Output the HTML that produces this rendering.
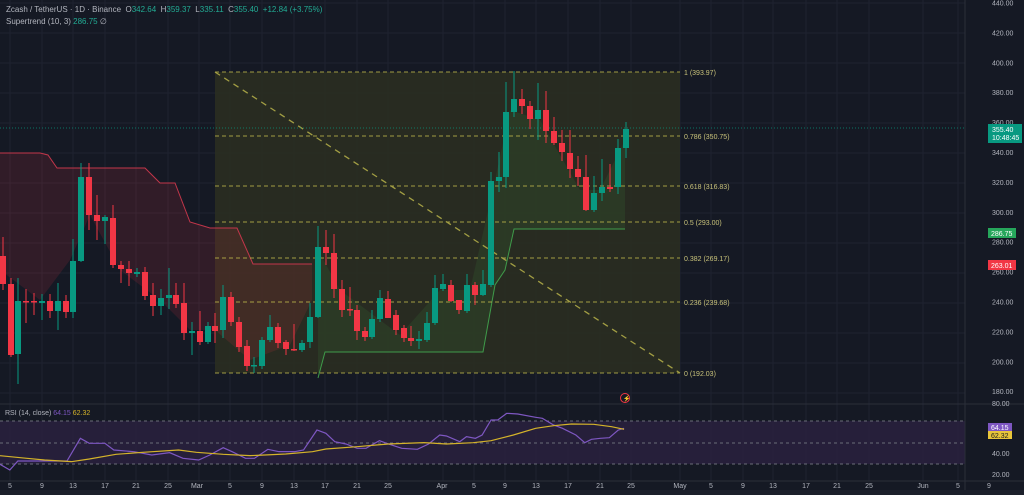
<!DOCTYPE html>
<html><head><meta charset="utf-8"><style>
html,body{margin:0;padding:0;background:#151924;width:1024px;height:495px;overflow:hidden;font-family:"Liberation Sans",sans-serif}
svg{position:absolute;left:0;top:0}
.t{position:absolute;color:#b2b5be;font-size:8px;white-space:nowrap}
.g{color:#22ab94}
</style></head><body>
<svg id="s" width="1024" height="495" xmlns="http://www.w3.org/2000/svg">
<rect width="1024" height="495" fill="#151924"/>
<g id="grid" stroke="#1f2330" stroke-width="1"></g>
<!-- fib box -->
<rect x="215" y="72" width="465" height="301" fill="#2a2d21" opacity="0.9"/>
<g id="st"></g>
<g stroke="#b8b34a" stroke-width="1" stroke-dasharray="4,3" opacity="0.85">
<line x1="215" y1="72" x2="680" y2="72"/><line x1="215" y1="136" x2="680" y2="136"/>
<line x1="215" y1="186" x2="680" y2="186"/><line x1="215" y1="222" x2="680" y2="222"/>
<line x1="215" y1="258" x2="680" y2="258"/><line x1="215" y1="302" x2="680" y2="302"/>
<line x1="215" y1="373" x2="680" y2="373"/>
<line x1="215" y1="72" x2="680" y2="373" stroke-dasharray="6,5" stroke-width="1.3"/>
</g>
<g font-size="7" fill="#c8c27a" font-family="Liberation Sans,sans-serif">
<text x="684" y="75">1 (393.97)</text><text x="684" y="139">0.786 (350.75)</text>
<text x="684" y="189">0.618 (316.83)</text><text x="684" y="225">0.5 (293.00)</text>
<text x="684" y="261">0.382 (269.17)</text><text x="684" y="305">0.236 (239.68)</text>
<text x="684" y="376">0 (192.03)</text>
</g>
<line x1="0" y1="128" x2="965" y2="128" stroke="#089981" stroke-dasharray="1,2" opacity="0.7"/>
<g id="c"></g>
<circle cx="625" cy="398" r="4.5" fill="none" stroke="#f23645" stroke-width="1"/>
<text x="623" y="400.5" font-size="6" fill="#f23645">⚡</text>
<!-- rsi pane -->
<line x1="0" y1="404" x2="1024" y2="404" stroke="#2a2e39"/>
<rect x="0" y="421" width="965" height="43" fill="#2a2140" opacity="0.8"/>
<g stroke="#6a6d78" stroke-dasharray="3,3"><line x1="0" y1="421" x2="965" y2="421"/><line x1="0" y1="443" x2="965" y2="443"/><line x1="0" y1="464" x2="965" y2="464"/></g>
<g transform="translate(0,400) scale(0.4464,0.3333)" fill="none" stroke-width="1.2">
<polyline vector-effect="non-scaling-stroke" stroke="#7e57c2" points="0,193 22,210 40,183 100,183 150,183 180,115 200,130 235,130 255,150 300,155 340,165 380,158 410,175 445,180 470,165 500,143 520,155 550,175 570,175 600,148 625,155 660,155 680,150 710,90 730,100 750,125 775,132 800,145 820,145 850,122 870,132 900,145 935,148 960,132 985,105 1000,108 1030,125 1045,110 1065,115 1080,105 1100,60 1115,60 1135,40 1160,42 1200,52 1215,55 1240,75 1260,85 1290,105 1310,128 1325,118 1345,115 1365,113 1385,90 1398,85"/>
<polyline vector-effect="non-scaling-stroke" stroke="#d4b32a" points="0,167 60,175 100,180 160,185 200,177 260,163 320,157 400,150 440,157 500,163 560,167 640,162 700,155 730,147 800,140 870,132 950,128 1000,132 1060,128 1100,122 1150,105 1200,85 1240,77 1280,72 1330,73 1370,80 1398,88"/>
</g>
<line x1="0" y1="481" x2="1024" y2="481" stroke="#2a2e39"/>
<rect x="0" y="490" width="1024" height="5" fill="#1c202b"/>
<line x1="965" y1="0" x2="965" y2="490" stroke="#2a2e39"/>
<g id="ax" font-size="7" fill="#b2b5be" font-family="Liberation Sans,sans-serif"></g>
<rect x="988" y="124" width="34" height="19" fill="#089981"/>
<text x="992" y="132" font-size="7" fill="#fff">355.40</text><text x="992" y="140" font-size="7" fill="#fff">10:48:45</text>
<rect x="988" y="228" width="28" height="10" fill="#26a65b"/><text x="991" y="236" font-size="7" fill="#fff">286.75</text>
<rect x="988" y="260" width="28" height="10" fill="#f23645"/><text x="991" y="268" font-size="7" fill="#fff">263.01</text>
<rect x="988" y="423" width="24" height="8" fill="#7e57c2"/><text x="991" y="430" font-size="7" fill="#fff">64.15</text>
<rect x="988" y="431" width="24" height="8" fill="#e8c53a"/><text x="991" y="438" font-size="7" fill="#222">62.32</text>
</svg>
<div class="t" style="left:6px;top:5px">Zcash / TetherUS · 1D · Binance &nbsp;O<span class="g">342.64</span> &nbsp;H<span class="g">359.37</span> &nbsp;L<span class="g">335.11</span> &nbsp;C<span class="g">355.40</span> &nbsp;<span class="g">+12.84 (+3.75%)</span></div>
<div class="t" style="left:6px;top:17px">Supertrend (10, 3) <span class="g">286.75</span> ∅</div>
<div class="t" style="left:5px;top:410px;font-size:7px">RSI (14, close) <span style="color:#7e57c2">64.15</span> <span style="color:#d4b32a">62.32</span></div>
<script>
const NS="http://www.w3.org/2000/svg";
function el(p,t,a){const e=document.createElementNS(NS,t);for(const k in a)e.setAttribute(k,a[k]);p.appendChild(e);return e;}
const grid=document.getElementById('grid');
[10,42,73,105,136,168,199,230,262,294,325,357,388,443,474,505,536,568,600,631,680,711,743,773,806,837,869,923,958].forEach(x=>el(grid,'line',{x1:x,y1:0,x2:x,y2:481}));
for(let y=3;y<400;y+=30)el(grid,'line',{x1:0,y1:y,x2:965,y2:y});
const ax=document.getElementById('ax');
for(let i=0;i<14;i++){const p=440-i*20;const y=3+i*29.9;const t=el(ax,'text',{x:992,y:y+2.5});t.textContent=p.toFixed(2);}
[[80,406],[40,456],[20,477]].forEach(a=>{const t=el(ax,'text',{x:992,y:a[1]});t.textContent=a[0].toFixed(2);});
const dl=[['5',10],['9',42],['13',73],['17',105],['21',136],['25',168],['Mar',197],['5',230],['9',262],['13',294],['17',325],['21',357],['25',388],['Apr',442],['5',474],['9',505],['13',536],['17',568],['21',600],['25',631],['May',680],['5',711],['9',743],['13',773],['17',806],['21',837],['25',869],['Jun',923],['5',958],['9',989]];
dl.forEach(d=>{const t=el(ax,'text',{x:d[1],y:488,'text-anchor':'middle'});t.textContent=d[0];});
// supertrend
const st=document.getElementById('st');
el(st,'path',{d:'M0,153 L40,153 48,155 57,168 145,168 160,183 175,183 190,222 210,228 237,228 253,264 312,264 312,300 290,345 250,360 215,330 190,330 160,300 120,270 90,215 70,260 40,300 0,270 Z',fill:'#f23645',opacity:0.13});
el(st,'path',{d:'M0,153 L40,153 48,155 57,168 145,168 160,183 175,183 190,222 210,228 237,228 253,264 312,264',fill:'none',stroke:'#c2364a','stroke-width':1});
el(st,'path',{d:'M318,378 L325,352 483,352 495,285 505,270 514,229 625,229 625,140 600,190 580,190 540,120 510,110 495,180 470,290 440,290 400,335 340,290 318,250 Z',fill:'#3a8a3a',opacity:0.15});
el(st,'path',{d:'M318,378 L325,352 483,352 495,285 505,270 514,229 625,229',fill:'none',stroke:'#3f9b4a','stroke-width':1});
const C=[[3,'r',256,284,237,290],[11,'r',284,355,278,357],[18,'g',301,354,278,384],[26,'r',301,302,289,323],[34,'r',301,302,293,315],[42,'g',301,303,294,320],[50,'r',301,311,294,318],[58,'g',301,311,283,330],[66,'r',301,312,295,318],[73,'g',261,312,239,318],[81,'g',177,261,163,262],[89,'r',177,215,163,230],[97,'r',215,221,195,240],[105,'g',217,221,215,244],[113,'r',218,265,205,268],[121,'r',265,269,261,283],[129,'r',269,273,261,286],[137,'g',272,274,268,277],[145,'r',272,296,267,300],[153,'r',295,306,283,316],[161,'g',298,306,289,315],[169,'g',295,298,268,309],[176,'r',295,304,283,308],[184,'r',303,333,283,340],[192,'g',331,333,322,355],[200,'r',331,342,311,345],[208,'g',326,342,322,344],[215,'r',326,331,313,343],[223,'g',297,330,285,338],[231,'r',297,322,292,326],[239,'r',322,347,317,352],[247,'r',346,366,340,371],[254,'g',365,366,357,373],[262,'g',340,366,337,369],[270,'g',327,340,315,342],[278,'r',327,343,323,348],[286,'r',342,349,340,355],[294,'r',349,350,324,351],[302,'g',343,350,340,352],[310,'g',317,342,303,348],[318,'g',247,317,226,318],[326,'r',247,253,230,265],[334,'r',253,289,234,298],[342,'r',289,310,280,317],[350,'r',309,310,287,316],[357,'r',310,331,305,340],[365,'r',331,337,327,341],[372,'g',319,337,310,339],[380,'g',298,319,290,322],[388,'r',299,318,291,316],[396,'r',315,330,310,335],[404,'r',328,338,325,342],[411,'r',338,341,326,346],[419,'g',339,341,331,349],[427,'g',323,340,312,342],[435,'g',288,323,275,325],[443,'g',284,289,274,291],[451,'r',285,301,280,302],[459,'r',300,310,300,314],[467,'g',285,311,274,313],[475,'r',285,295,282,305],[483,'g',284,295,270,296],[491,'g',181,285,172,287],[499,'g',177,181,152,192],[506,'g',112,177,82,188],[514,'g',99,112,71,117],[522,'r',99,106,89,114],[530,'r',106,119,101,129],[538,'g',110,119,83,140],[546,'r',110,131,91,143],[554,'r',131,143,117,145],[562,'r',143,152,130,161],[570,'r',153,169,130,178],[578,'r',169,177,156,186],[586,'r',177,210,155,211],[594,'g',193,210,176,212],[602,'g',187,193,159,201],[610,'r',187,189,164,192],[618,'g',148,187,139,194],[626,'g',129,148,122,158]];
const cg=document.getElementById('c');
C.forEach(c=>{const col=c[1]=='g'?'#089981':'#f23645';el(cg,'line',{x1:c[0],y1:c[4],x2:c[0],y2:c[5],stroke:col,'stroke-width':1});el(cg,'rect',{x:c[0]-3,y:c[2],width:6,height:Math.max(1.5,c[3]-c[2]),fill:col});});
</script>
</body></html>
